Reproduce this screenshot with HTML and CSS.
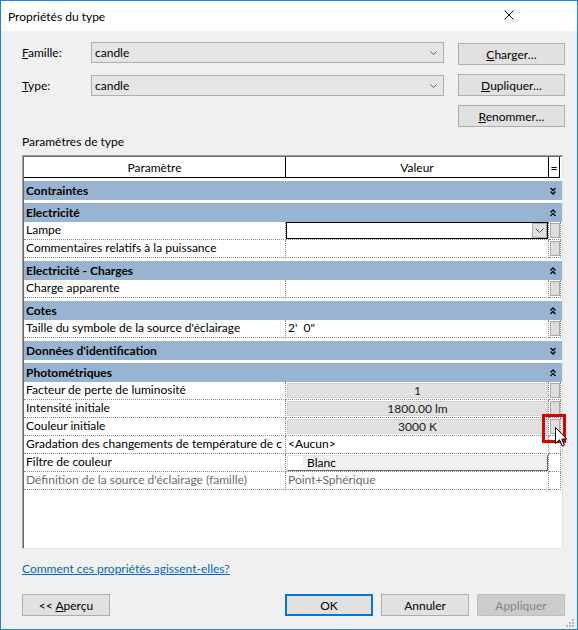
FILE: index.html
```html
<!DOCTYPE html>
<html lang="fr">
<head>
<meta charset="utf-8">
<title>Propriétés du type</title>
<link rel="stylesheet" href="styles.css">
</head>
<body>
<div class="window">
  <div class="titlebar">
    <span class="title">Propriétés du type</span>
    <svg class="close" width="10" height="10" viewBox="0 0 10 10"><path d="M0.5 0.5 L9.5 9.5 M9.5 0.5 L0.5 9.5" stroke="#000" stroke-width="1" fill="none"/></svg>
  </div>
  <div class="content">
    <div class="top">
      <div class="fields">
        <div class="field">
          <span class="lbl"><u>F</u>amille:</span>
          <div class="combo"><span>candle</span><svg class="cchev" width="7" height="4" viewBox="0 0 7 4"><polyline points="0.5,0.5 3.5,3.5 6.5,0.5" fill="none" stroke="#606060" stroke-width="1"/></svg></div>
        </div>
        <div class="field">
          <span class="lbl"><u>T</u>ype:</span>
          <div class="combo"><span>candle</span><svg class="cchev" width="7" height="4" viewBox="0 0 7 4"><polyline points="0.5,0.5 3.5,3.5 6.5,0.5" fill="none" stroke="#606060" stroke-width="1"/></svg></div>
        </div>
      </div>
      <div class="side">
        <button class="btn wide"><span><u>C</u>harger…</span></button>
        <button class="btn wide"><span><u>D</u>upliquer…</span></button>
        <button class="btn wide"><span><u>R</u>enommer…</span></button>
      </div>
    </div>

    <div class="section-label">Paramètres de type</div>

    <div class="grid">
      <div class="grid-inner">
        <div class="hdr">
          <div class="hc h1">Paramètre</div>
          <div class="hc h2">Valeur</div>
          <div class="hc h3">=</div>
        </div>

        <div class="group"><span>Contraintes</span><svg class="gchev" width="6" height="8" viewBox="0 0 6 8"><path d="M0.5 1 L3 3.5 L5.5 1 M0.5 4.5 L3 7 L5.5 4.5" fill="none" stroke="#000" stroke-width="1.3"/></svg></div>

        <div class="group"><span>Electricité</span><svg class="gchev" width="6" height="8" viewBox="0 0 6 8"><path d="M0.5 3.5 L3 1 L5.5 3.5 M0.5 7 L3 4.5 L5.5 7" fill="none" stroke="#000" stroke-width="1.3"/></svg></div>
        <div class="row">
          <div class="c1">Lampe</div>
          <div class="c2 edit-cell"><div class="editor"><div class="ddbtn"><svg width="9" height="5" viewBox="0 0 9 5"><polyline points="0.5,0.5 4.5,4.5 8.5,0.5" fill="none" stroke="#606060" stroke-width="1"/></svg></div></div></div>
          <div class="c3"><div class="sq"></div></div>
        </div>
        <div class="row">
          <div class="c1">Commentaires relatifs à la puissance</div>
          <div class="c2"></div>
          <div class="c3"><div class="sq"></div></div>
        </div>

        <div class="group"><span>Electricité - Charges</span><svg class="gchev" width="6" height="8" viewBox="0 0 6 8"><path d="M0.5 3.5 L3 1 L5.5 3.5 M0.5 7 L3 4.5 L5.5 7" fill="none" stroke="#000" stroke-width="1.3"/></svg></div>
        <div class="row">
          <div class="c1">Charge apparente</div>
          <div class="c2"></div>
          <div class="c3"><div class="sq"></div></div>
        </div>

        <div class="group"><span>Cotes</span><svg class="gchev" width="6" height="8" viewBox="0 0 6 8"><path d="M0.5 3.5 L3 1 L5.5 3.5 M0.5 7 L3 4.5 L5.5 7" fill="none" stroke="#000" stroke-width="1.3"/></svg></div>
        <div class="row">
          <div class="c1">Taille du symbole de la source d'éclairage</div>
          <div class="c2 txt">2'&nbsp;&nbsp;0"</div>
          <div class="c3"><div class="sq"></div></div>
        </div>

        <div class="group"><span>Données d'identification</span><svg class="gchev" width="6" height="8" viewBox="0 0 6 8"><path d="M0.5 1 L3 3.5 L5.5 1 M0.5 4.5 L3 7 L5.5 4.5" fill="none" stroke="#000" stroke-width="1.3"/></svg></div>

        <div class="group"><span>Photométriques</span><svg class="gchev" width="6" height="8" viewBox="0 0 6 8"><path d="M0.5 3.5 L3 1 L5.5 3.5 M0.5 7 L3 4.5 L5.5 7" fill="none" stroke="#000" stroke-width="1.3"/></svg></div>
        <div class="row">
          <div class="c1">Facteur de perte de luminosité</div>
          <div class="c2"><div class="valbtn">1</div></div>
          <div class="c3"><div class="sq"></div></div>
        </div>
        <div class="row">
          <div class="c1">Intensité initiale</div>
          <div class="c2"><div class="valbtn">1800.00 lm</div></div>
          <div class="c3"><div class="sq"></div></div>
        </div>
        <div class="row">
          <div class="c1">Couleur initiale</div>
          <div class="c2"><div class="valbtn">3000 K</div></div>
          <div class="c3"><div class="sq"></div></div>
        </div>
        <div class="row">
          <div class="c1">Gradation des changements de température de c</div>
          <div class="c2 txt">&lt;Aucun&gt;</div>
          <div class="c3"></div>
        </div>
        <div class="row">
          <div class="c1">Filtre de couleur</div>
          <div class="c2"><div class="colorbtn"><div class="swatch"></div><div class="colorname">Blanc</div></div></div>
          <div class="c3"></div>
        </div>
        <div class="row disabled-row">
          <div class="c1">Définition de la source d'éclairage (famille)</div>
          <div class="c2 txt">Point+Sphérique</div>
          <div class="c3"></div>
        </div>
      </div>
    </div>

    <a class="link" href="#">Comment ces propriétés agissent-elles?</a>

    <div class="bottom">
      <button class="btn"><span>&lt;&lt; <u>A</u>perçu</span></button>
      <div class="spacer"></div>
      <button class="btn default">OK</button>
      <button class="btn">Annuler</button>
      <button class="btn disabled">Appliquer</button>
    </div>
  </div>

  <svg class="grip" width="9" height="9" viewBox="0 0 9 9">
    <rect x="6" y="0" width="2" height="2" fill="#b8b8b8"/>
    <rect x="3" y="3" width="2" height="2" fill="#b8b8b8"/>
    <rect x="6" y="3" width="2" height="2" fill="#b8b8b8"/>
    <rect x="0" y="6" width="2" height="2" fill="#b8b8b8"/>
    <rect x="3" y="6" width="2" height="2" fill="#b8b8b8"/>
    <rect x="6" y="6" width="2" height="2" fill="#b8b8b8"/>
  </svg>
  <div class="highlight"></div>
  <svg class="cursor" width="13" height="21" viewBox="0 0 13 21">
    <path d="M0.5 0.5 L0.5 16.5 L4.5 12.8 L7.2 19.2 L9.4 18.3 L6.8 12 L11.8 12 Z" fill="#fff" stroke="#000" stroke-width="1" stroke-linejoin="miter"/>
  </svg>
</div>
</body>
</html>
```

FILE: styles.css
```css
* { box-sizing: border-box; }
html, body { margin: 0; padding: 0; }
body {
  font-family: Lato, "Liberation Sans", sans-serif;
  font-size: 12px;
  color: #000;
  background: #fff;
}

.window {
  position: relative;
  width: 578px;
  height: 630px;
  border: 1px solid #1883d7;
  background: #f0f0f0;
  display: flex;
  flex-direction: column;
  overflow: hidden;
}

.titlebar {
  flex: none;
  height: 30px;
  background: #fff;
  display: flex;
  align-items: center;
  justify-content: space-between;
  padding-left: 7px;
  padding-right: 63px;
}
.title { font-size: 12px; }
.close { display: block; margin-top: -2px; }

.content {
  display: flex;
  flex-direction: column;
  padding: 0 12px 0 21px;
}

/* top area */
.top { display: flex; margin-top: 11px; }
.fields { display: flex; flex-direction: column; gap: 12px; }
.field { display: flex; align-items: center; }
.lbl { width: 69px; }
.combo {
  width: 353px;
  height: 21px;
  border: 1px solid #adadad;
  background: #e5e5e5;
  display: flex;
  align-items: center;
  justify-content: space-between;
  padding: 0 6px 0 3px;
}
.cchev { display: block; }
.side {
  margin-left: 14px;
  margin-top: 1px;
  display: flex;
  flex-direction: column;
  gap: 9px;
}

.btn {
  font: inherit;
  color: #000;
  width: 88px;
  height: 22px;
  padding: 0;
  background: #e1e1e1;
  border: 1px solid #adadad;
  display: flex;
  align-items: center;
  justify-content: center;
  white-space: pre;
}
.btn.wide { width: 107px; }
.btn.default { border: 2px solid #0078d7; }
.btn.disabled { background: #cccccc; border-color: #bfbfbf; color: #838383; }

.section-label { margin-top: 7px; height: 16px; line-height: 16px; }

/* property grid */
.grid {
  margin-top: 5px;
  width: 541px;
  height: 394px;
  border-top: 1px solid #a0a0a0;
  border-left: 1px solid #a0a0a0;
  border-right: 1px solid #e3e3e3;
  border-bottom: 1px solid #e3e3e3;
}
.grid-inner {
  height: 100%;
  background: #fff;
  border-top: 1px solid #696969;
  border-left: 1px solid #696969;
  overflow: hidden;
}

.hdr { display: flex; height: 21px; }
.hc {
  display: flex;
  align-items: center;
  justify-content: center;
  border-right: 1px solid #000;
  border-bottom: 1px solid #000;
}
.h1 { width: 262px; }
.h2 { width: 263px; }
.h3 { width: 11px; }

.group {
  margin-top: 3px;
  height: 19px;
  background: #99b4d1;
  font-weight: bold;
  display: flex;
  align-items: center;
  justify-content: space-between;
  padding: 0 6px 0 2px;
}
.gchev { display: block; }

.row { display: flex; height: 18px; }
.c1, .c2, .c3 {
  height: 18px;
  border-right: 1px dotted #8a8a8a;
  border-bottom: 1px dotted #8a8a8a;
  white-space: nowrap;
  overflow: hidden;
}
.c1 { width: 262px; padding-left: 2px; line-height: 16px; }
.c2 { width: 263px; }
.c3 { width: 12px; }
.txt { padding-left: 2px; line-height: 16px; }

.disabled-row { color: #6d6d6d; }

.edit-cell { overflow: visible; }
.editor {
  width: 262px;
  height: 17px;
  border: 1px solid #000;
  background: #fff;
  display: flex;
  justify-content: flex-end;
}
.ddbtn {
  width: 15px;
  height: 15px;
  background: #e1e1e1;
  border: 1px solid #adadad;
  display: flex;
  align-items: center;
  justify-content: center;
}
.ddbtn svg { display: block; }

.sq {
  margin: 1px 0 0 1px;
  width: 10px;
  height: 15px;
  background: #dedede;
  border: 1px solid #a8a8a8;
}

.valbtn {
  margin: 1px 0 0 1px;
  width: 261px;
  height: 15px;
  background: #e1e1e1;
  border: 1px solid #d2d2d2;
  display: flex;
  align-items: center;
  justify-content: center;
  color: #1a1a1a;
}

.colorbtn {
  margin: 1px 0 0 1px;
  width: 261px;
  height: 16px;
  display: flex;
  border-top: 1px solid #e3e3e3;
  border-left: 1px solid #e3e3e3;
  border-right: 1px solid #696969;
  border-bottom: 1px solid #696969;
}
.swatch { width: 15px; background: #fff; }
.colorname {
  flex: 1;
  background: #f0f0f0;
  padding-left: 4px;
  line-height: 14px;
}

.link {
  margin-top: 12px;
  line-height: 16px;
  height: 16px;
  color: #0066cc;
  text-decoration: underline;
  align-self: flex-start;
}

.bottom { display: flex; gap: 8px; margin-top: 17px; }
.spacer { flex: 1; }

/* overlays */
.grip { position: absolute; right: 2px; bottom: 1px; }
.highlight {
  position: absolute;
  left: 541px;
  top: 413px;
  width: 24px;
  height: 29px;
  border: 3px solid #e00000;
}
.cursor { position: absolute; left: 554px; top: 426px; }
```
